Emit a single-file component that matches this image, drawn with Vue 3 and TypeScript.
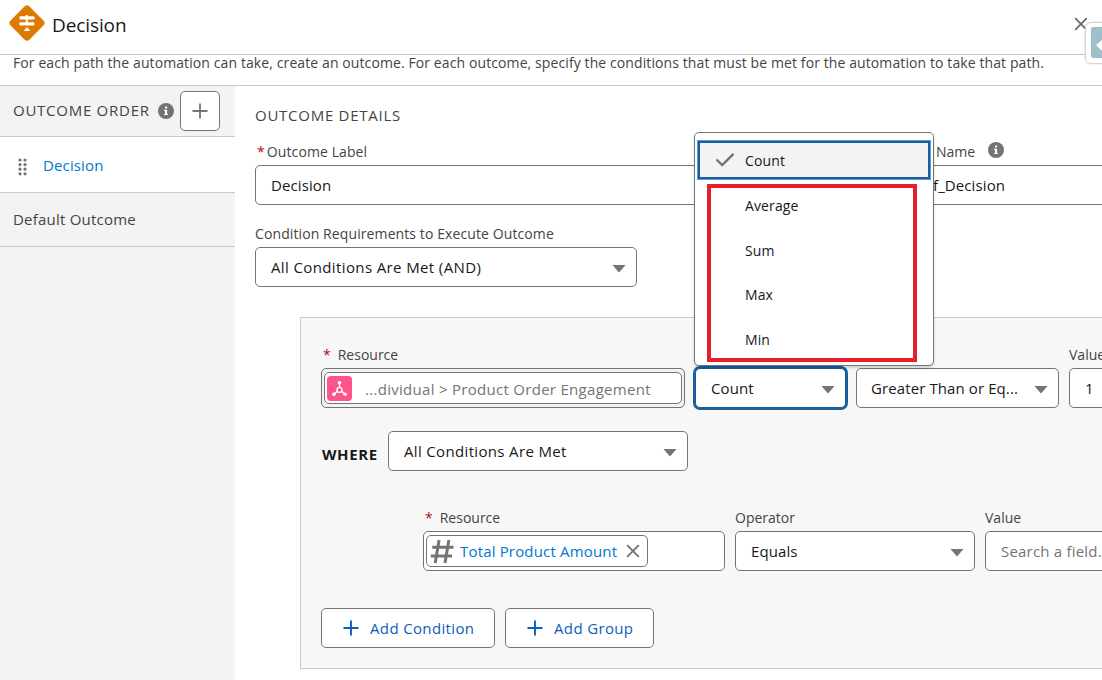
<script setup lang="ts">
import { ref } from 'vue'

const options = ['Average', 'Sum', 'Max', 'Min']
const selected = ref('Count')
</script>

<template>
  <div class="modal">
    <header class="head">
      <svg class="logo" width="38" height="38" viewBox="0 0 38 38">
        <rect x="5.6" y="5.6" width="26.8" height="26.8" rx="3.6" fill="#dd7a01" transform="rotate(45 19 19)" />
        <path fill="#fff" d="M11.5 12.2h6.3V11h2v1.2h5.7l1.6 1.7-1.6 1.7h-14zM12.3 18.2h14v3.4h-14l-1.6-1.7zM17.8 15.5h2v3h-2zM17.5 23.8h3v1l1.8 2.2h-6.6l1.8-2.2z" />
      </svg>
      <h1>Decision</h1>
      <svg class="close" width="14" height="14" viewBox="0 0 14 14" fill="none" stroke="#666" stroke-width="1.7"><path d="M1.2 1.2l11.6 11.6M12.8 1.2L1.2 12.8" /></svg>
    </header>
    <p class="desc">For each path the automation can take, create an outcome. For each outcome, specify the conditions that must be met for the automation to take that path.</p>

    <div class="body">
      <aside class="side">
        <div class="side-head">
          <h2 class="caps order">OUTCOME ORDER</h2>
          <svg class="info" width="16" height="16" viewBox="0 0 16 16"><circle cx="8" cy="8" r="8" fill="#747474" /><path fill="#fff" d="M7 3.6h2.1v2H7zM6 6.8h3.1v4.1H10v1.2H6v-1.2h1V8H6z" /></svg>
          <button class="add"><svg width="16" height="16" viewBox="0 0 16 16" stroke="#747474" stroke-width="1.8"><path d="M8 .5v15M.5 8h15" /></svg></button>
        </div>
        <div class="item active">
          <svg width="9" height="18" viewBox="0 0 9 18" fill="#747474">
            <template v-for="n in 4" :key="n">
              <circle cx="2" :cy="n * 4.6 - 2.6" r="1.6" /><circle cx="7" :cy="n * 4.6 - 2.6" r="1.6" />
            </template>
          </svg>
          <span>Decision</span>
        </div>
        <div class="item"><span class="t-default">Default Outcome</span></div>
      </aside>

      <main class="main">
        <h2 class="caps details">OUTCOME DETAILS</h2>
        <div class="names">
          <div class="field outcome">
            <label class="t-olabel"><i>*</i>Outcome Label</label>
            <div class="box">Decision</div>
          </div>
          <div class="field api">
            <label><span>Name</span><svg class="info" width="16" height="16" viewBox="0 0 16 16"><circle cx="8" cy="8" r="8" fill="#747474" /><path fill="#fff" d="M7 3.6h2.1v2H7zM6 6.8h3.1v4.1H10v1.2H6v-1.2h1V8H6z" /></svg></label>
            <div class="box">f_Decision</div>
          </div>
        </div>
        <div class="field require">
          <label class="t-require">Condition Requirements to Execute Outcome</label>
          <div class="box select"><span class="t-and">All Conditions Are Met (AND)</span><b class="caret"></b></div>
        </div>

        <section class="panel">
          <div class="row">
            <div class="field resource">
              <label class="req"><i>*</i>Resource</label>
              <div class="box holder">
                <div class="pill wide">
                  <svg width="25" height="25" viewBox="0 0 25 25">
                    <rect width="25" height="25" rx="4" fill="#ff538a" />
                    <g fill="none" stroke="#fff" stroke-width="1.4"><circle cx="12.5" cy="13.9" r="2.5" /><path d="M12.5 7v4.4M10.3 15.4l-3.4 2.7M14.7 15.4l3.4 2.7" /></g>
                    <g fill="#fff"><circle cx="12.5" cy="6.7" r="1.8" /><circle cx="6.9" cy="18.2" r="1.8" /><circle cx="18.1" cy="18.2" r="1.8" /></g>
                  </svg>
                  <span class="t-path">...dividual &gt; Product Order Engagement</span>
                </div>
              </div>
            </div>
            <div class="field aggregate">
              <div class="box select focus"><span>{{ selected }}</span><b class="caret"></b></div>
              <div class="menu">
                <div class="option chosen">
                  <svg width="20" height="16" viewBox="0 0 20 16" fill="none" stroke="#747474" stroke-width="2.4"><path d="M1.5 7.5l5.7 5.5L18.5 1.8" /></svg>
                  <span>{{ selected }}</span>
                </div>
                <div class="marked">
                  <div v-for="option in options" :key="option" class="option">{{ option }}</div>
                </div>
              </div>
            </div>
            <div class="field compare">
              <div class="box select"><span class="t-gte">Greater Than or Eq...</span><b class="caret"></b></div>
            </div>
            <div class="field amount">
              <label>Value</label>
              <div class="box">1</div>
            </div>
          </div>

          <div class="where">
            <strong>WHERE</strong>
            <div class="box select"><span class="t-met">All Conditions Are Met</span><b class="caret"></b></div>
          </div>

          <div class="row nested">
            <div class="field n-resource">
              <label class="req"><i>*</i>Resource</label>
              <div class="box holder white">
                <div class="pill token">
                  <svg width="24" height="25" viewBox="0 0 24 25" fill="none" stroke="#747474" stroke-width="3"><path d="M9.1 1L5.2 24M18.9 1L15 24M2.3 8.2h21.2M.8 17h21.2" /></svg>
                  <span class="t-total">Total Product Amount</span>
                  <svg class="x" width="14" height="14" viewBox="0 0 14 14" fill="none" stroke="#747474" stroke-width="1.9"><path d="M1.2 1.2l11.6 11.6M12.8 1.2L1.2 12.8" /></svg>
                </div>
              </div>
            </div>
            <div class="field n-operator">
              <label>Operator</label>
              <div class="box select"><span>Equals</span><b class="caret"></b></div>
            </div>
            <div class="field n-value">
              <label>Value</label>
              <div class="box hint">Search a field...</div>
            </div>
          </div>

          <div class="actions">
            <button class="condition"><svg width="16" height="16" viewBox="0 0 16 16" stroke="#0b5cc0" stroke-width="1.9"><path d="M8 .5v15M.5 8h15" /></svg><span>Add Condition</span></button>
            <button class="group"><svg width="16" height="16" viewBox="0 0 16 16" stroke="#0b5cc0" stroke-width="1.9"><path d="M8 .5v15M.5 8h15" /></svg><span>Add Group</span></button>
          </div>
        </section>
      </main>
    </div>

    <div class="tab">
      <svg width="17" height="31" viewBox="0 0 17 31"><path fill="#9fbfcb" d="M2 0h15v31H2a2 2 0 0 1-2-2V2a2 2 0 0 1 2-2z" /><path fill="#fff" d="M17 8L5 18l3 3 9 8z" /></svg>
    </div>
  </div>
</template>

<style>
body { margin: 0; overflow: hidden; }
</style>

<style scoped>
* { box-sizing: border-box; }
.modal { position: relative; width: 1102px; height: 680px; overflow: hidden; background: #fff; color: #181818; font: 15px/20px "Open Sans", "Noto Sans", sans-serif; white-space: nowrap; display: flex; flex-direction: column; }
h1, h2, p { margin: 0; font-weight: 400; }
svg { display: block; flex: none; }
i { font-style: normal; color: #ba0517; }
button { font: inherit; background: #fff; border: 1px solid #747474; border-radius: 5px; padding: 0; display: flex; align-items: center; }
.head { height: 55px; flex: none; border-bottom: 1px solid #c9c9c9; display: flex; padding-left: 8px; }
.logo { margin-top: 4px; }
h1 { font-size: 19px; line-height: 26px; margin: 12px 0 0 6px; letter-spacing: -.1px; }
.close { margin: 17px 14px 0 auto; }
.desc { height: 31px; flex: none; border-bottom: 1px solid #c9c9c9; padding: 0 13px; line-height: 16px; font-size: 14px; color: #444; letter-spacing: .1px; }
.body { flex: 1; display: flex; min-height: 0; }
.side { width: 235px; flex: none; background: #f3f3f3; color: #444; }
.side-head { height: 51px; border-bottom: 1px solid #c9c9c9; display: flex; align-items: center; padding-left: 13px; }
.caps { font-size: 15px; line-height: 20px; color: #444; letter-spacing: .74px; }
.order { width: 145px; margin-top: -2px; }
.add { width: 40px; height: 40px; justify-content: center; margin-left: 6px; }
.item { height: 54px; border-bottom: 1px solid #c9c9c9; display: flex; align-items: center; padding-left: 13px; }
.item.active { height: 56px; background: #fff; color: #0176d3; padding-left: 18px; gap: 16px; letter-spacing: .13px; }
.item.active svg { margin-top: 5px; }
.t-default { margin-top: -2px; letter-spacing: .22px; }
.main { width: 867px; flex: none; padding: 19px 0 0 20px; overflow: hidden; }
.names { display: flex; gap: 40px; margin-top: 17px; }
.field { flex: none; }
.field label { display: flex; height: 20px; line-height: 20px; font-size: 14px; color: #444; }
.box { height: 40px; border: 1px solid #747474; border-radius: 5px; background: #fff; padding: 0 15px; line-height: 39px; font-size: 15px; letter-spacing: .1px; }
.names label { margin-bottom: 3px; }
.outcome { width: 622px; }
.outcome i { margin: 0 2px 0 2px; }
.t-olabel { letter-spacing: .1px; }
.api { width: 220px; }
.api label { padding-left: 19px; }
.api .info { margin: 0 0 0 13px; }
.require { width: 382px; margin-top: 19px; }
.require label { margin-bottom: 3px; }
.t-require { letter-spacing: .1px; }
.select { display: flex; align-items: center; justify-content: space-between; padding-right: 10px; }
.caret { width: 14px; height: 8px; background: #747474; clip-path: polygon(0 0, 100% 0, 50% 100%); margin-top: 3px; }
.t-and { letter-spacing: .38px; }
.t-met { letter-spacing: .34px; }
.t-path { letter-spacing: .29px; }
.t-gte { letter-spacing: .1px; }
.t-total { letter-spacing: .17px; }
.panel { margin: 30px 0 0 45px; width: 860px; height: 352px; border: 1px solid #c9c9c9; background: #f7f7f7; padding: 27px 0 0 20px; }
.row { display: flex; gap: 10px; align-items: flex-end; }
.panel label { margin-bottom: 3px; }
.req i { margin: 0 7px 0 2px; }
.resource { width: 364px; }
.holder { padding: 3px 2px; background: #f3f3f3; }
.holder.white { background: #fff; }
.pill { height: 32px; border: 1px solid #747474; border-radius: 5px; background: #fff; display: flex; align-items: center; line-height: 30px; }
.wide { width: 358px; padding-left: 2px; gap: 13px; color: #747474; }
.wide span { padding-top: 2px; }
.aggregate { width: 151px; position: relative; }
.focus { border-color: #1b5e9f; box-shadow: 0 0 0 2px #1b5e9f; }
.menu { position: absolute; left: -1px; bottom: 42px; width: 240px; height: 234px; z-index: 2; background: #fff; border: 1px solid #747474; border-radius: 5px; box-shadow: 0 2px 3px rgba(0,0,0,.16); padding: 8px 3px 0; }
.option { height: 44.5px; flex: none; line-height: 43px; padding-left: 34px; font-size: 14px; letter-spacing: .12px; }
.chosen { height: 38px; line-height: 36px; border: 2px solid #1b5e9f; outline: 0.5px solid #5b9bd5; background: #f3f3f3; display: flex; align-items: center; padding-left: 15px; gap: 10px; }
.chosen span { padding-top: 2px; }
.marked { width: 210px; height: 178px; border: 4px solid #e6202a; margin: 5px 0 0 9px; display: flex; flex-direction: column; justify-content: center; }
.compare { width: 203px; }
.compare .box { padding-left: 14px; }
.amount { width: 120px; }
.where { display: flex; align-items: center; margin-top: 23px; }
.where strong { width: 67px; font-size: 15px; letter-spacing: .6px; padding: 6px 0 0 1px; color: #181818; }
.where .box { width: 300px; }
.nested { margin: 37px 0 0 102px; }
.n-resource { width: 302px; }
.token { width: 222px; padding-left: 3px; color: #0176d3; }
.token span { margin-left: 6px; width: 158px; }
.token .x { margin-left: 8px; }
.n-operator { width: 240px; }
.n-value { width: 200px; }
.hint { color: #747474; letter-spacing: .2px; }
.actions { display: flex; gap: 10px; margin-top: 37px; }
.actions button { height: 40px; color: #0b5cc0; padding-left: 21px; gap: 11px; letter-spacing: .36px; }
.condition { width: 174px; }
.group { width: 149px; }
.tab { position: absolute; left: 1085px; top: 22px; width: 30px; height: 42px; border: 1px solid #d6d6d6; border-radius: 6px; background: rgba(255,255,255,.85); padding: 4px 0 0 5px; box-shadow: 0 0 2px rgba(0,0,0,.2); }
</style>
